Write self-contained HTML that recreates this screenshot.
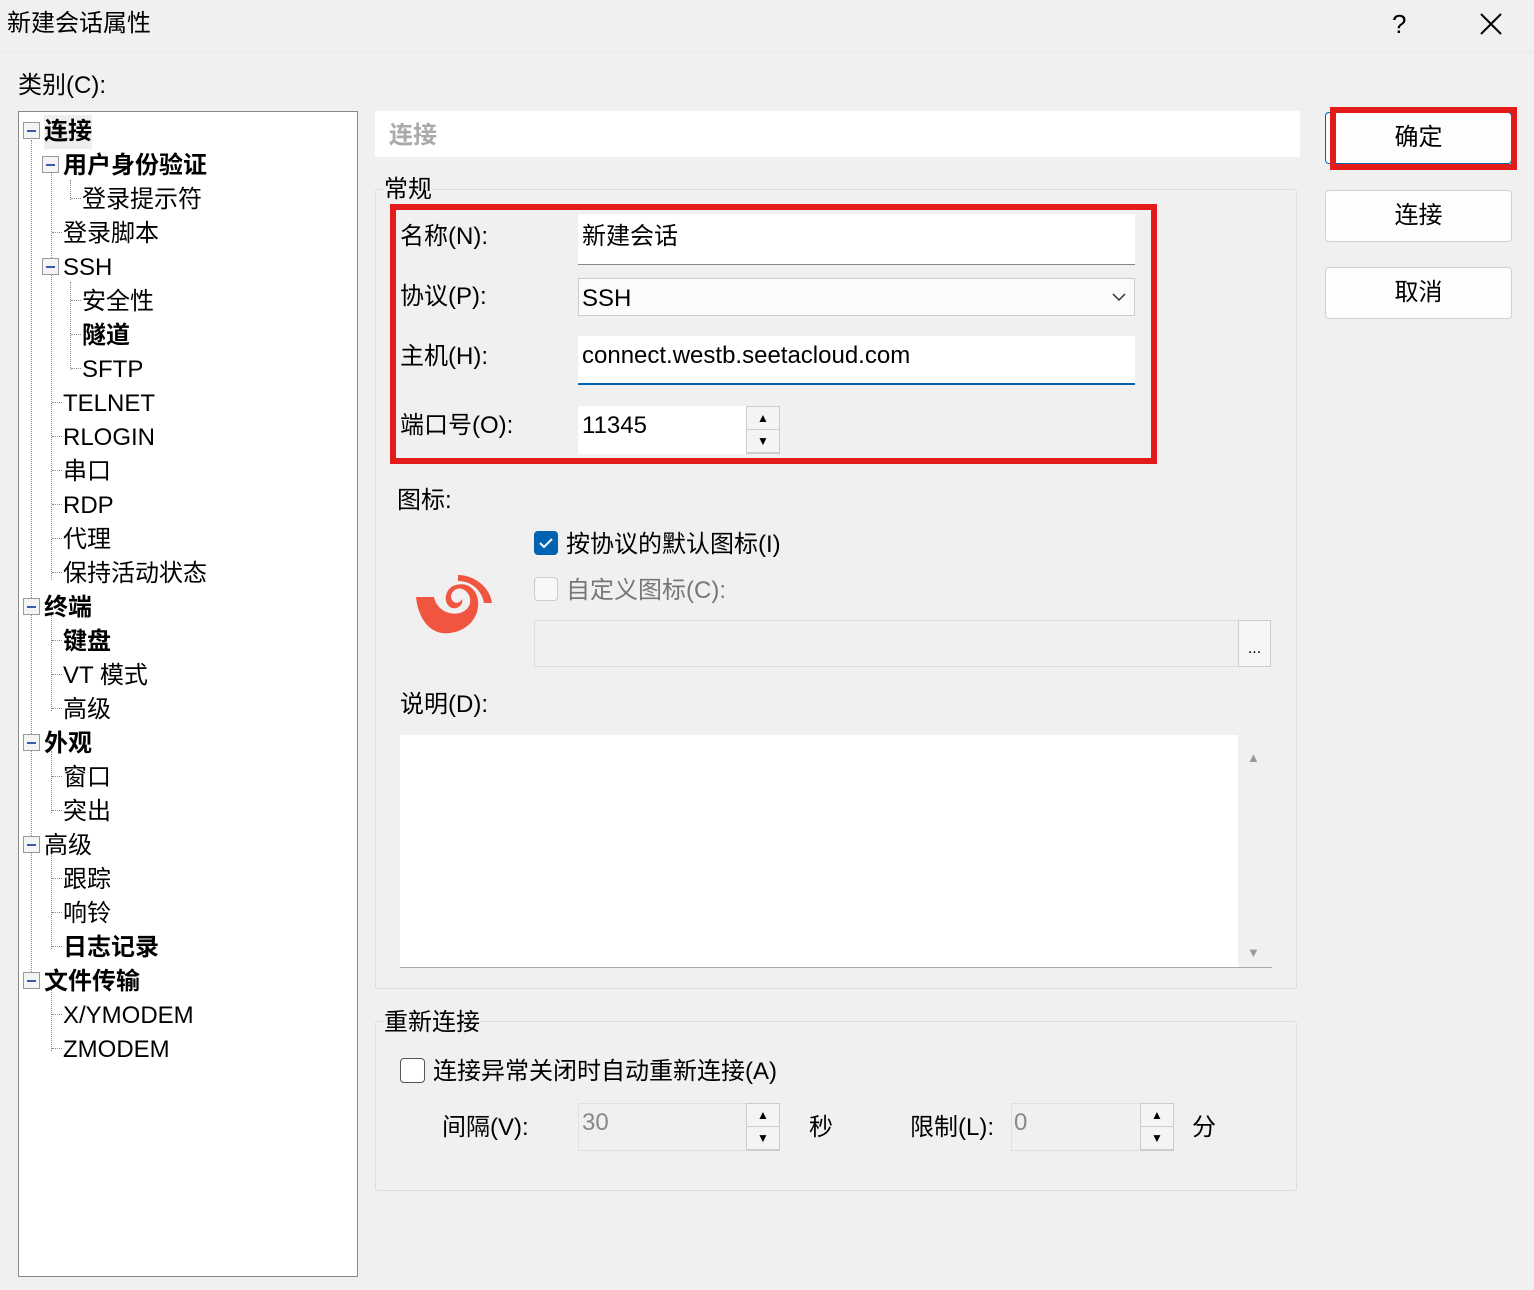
<!DOCTYPE html>
<html><head><meta charset="utf-8"><style>
*{margin:0;padding:0;box-sizing:border-box}
body{width:1534px;height:1290px;background:#f0f0f0;font-family:"Liberation Sans","Noto Sans CJK SC",sans-serif;font-size:24px;color:#000;position:relative;overflow:hidden}
.a{position:absolute;white-space:nowrap;line-height:26px}
.t{position:absolute;line-height:34px;height:34px;white-space:nowrap;margin-top:2px}
.b{font-weight:bold}
.box{position:absolute;width:17px;height:17px;border:1px solid #999;background:#f4f4f4}
.box:after{content:"";position:absolute;left:3px;top:7px;width:9px;height:2px;background:#3b5ea8}
.vl{position:absolute;border-left:1px dotted #888}
.hl{position:absolute;border-top:1px dotted #888;width:10px}
.btn{position:absolute;background:#fdfdfd;border:1px solid #d0d0d0;border-radius:4px;text-align:center;line-height:50px}
.red{position:absolute;border:6px solid #e31b1b}
.in{position:absolute;background:#fff}
.spin{position:absolute;width:34px;border:1px solid #ccc;background:#f0f0f0}
.spin div{height:50%;border-bottom:1px solid #ccc;background:#f4f4f4;display:flex;align-items:center;justify-content:center;font-size:12px}
.grp{position:absolute;border:1px solid #ddd;border-radius:3px}
</style></head><body>
<div class="a" style="left:7px;top:11px">新建会话属性</div>
<div class="a" style="left:1392px;top:11px;font-size:26px">?</div>
<svg class="a" style="left:1479px;top:12px" width="24" height="24"><path d="M2 2L22 22M22 2L2 22" stroke="#000" stroke-width="2"/></svg>
<div class="a" style="left:0;top:52px;width:1534px;height:1px;background:#e8e8e8"></div>
<div class="a" style="left:18px;top:73px">类别(C):</div>
<div class="a" style="left:18px;top:111px;width:340px;height:1166px;background:#fff;border:1px solid #888"></div>
<div class="vl" style="left:31px;top:140px;height:842px"></div>
<div class="vl" style="left:51px;top:172px;height:408px"></div>
<div class="vl" style="left:70px;top:180px;height:20px"></div>
<div class="vl" style="left:70px;top:282px;height:88px"></div>
<div class="vl" style="left:51px;top:615px;height:96px"></div>
<div class="vl" style="left:51px;top:751px;height:62px"></div>
<div class="vl" style="left:51px;top:853px;height:96px"></div>
<div class="vl" style="left:51px;top:989px;height:62px"></div>
<div class="box" style="left:23px;top:122px"></div>
<div class="t b" style="left:44px;top:113px;background:#eee">连接</div>
<div class="box" style="left:42px;top:156px"></div>
<div class="t b" style="left:63px;top:147px">用户身份验证</div>
<div class="hl" style="left:71px;top:198px"></div><div class="t" style="left:82px;top:181px">登录提示符</div>
<div class="hl" style="left:52px;top:232px"></div><div class="t" style="left:63px;top:215px">登录脚本</div>
<div class="box" style="left:42px;top:258px"></div><div class="t" style="left:63px;top:249px">SSH</div>
<div class="hl" style="left:71px;top:300px"></div><div class="t" style="left:82px;top:283px">安全性</div>
<div class="hl" style="left:71px;top:334px"></div><div class="t b" style="left:82px;top:317px">隧道</div>
<div class="hl" style="left:71px;top:368px"></div><div class="t" style="left:82px;top:351px">SFTP</div>
<div class="hl" style="left:52px;top:402px"></div><div class="t" style="left:63px;top:385px">TELNET</div>
<div class="hl" style="left:52px;top:436px"></div><div class="t" style="left:63px;top:419px">RLOGIN</div>
<div class="hl" style="left:52px;top:470px"></div><div class="t" style="left:63px;top:453px">串口</div>
<div class="hl" style="left:52px;top:504px"></div><div class="t" style="left:63px;top:487px">RDP</div>
<div class="hl" style="left:52px;top:538px"></div><div class="t" style="left:63px;top:521px">代理</div>
<div class="hl" style="left:52px;top:572px"></div><div class="t" style="left:63px;top:555px">保持活动状态</div>
<div class="box" style="left:23px;top:598px"></div><div class="t b" style="left:44px;top:589px">终端</div>
<div class="hl" style="left:52px;top:640px"></div><div class="t b" style="left:63px;top:623px">键盘</div>
<div class="hl" style="left:52px;top:674px"></div><div class="t" style="left:63px;top:657px">VT 模式</div>
<div class="hl" style="left:52px;top:708px"></div><div class="t" style="left:63px;top:691px">高级</div>
<div class="box" style="left:23px;top:734px"></div><div class="t b" style="left:44px;top:725px">外观</div>
<div class="hl" style="left:52px;top:776px"></div><div class="t" style="left:63px;top:759px">窗口</div>
<div class="hl" style="left:52px;top:810px"></div><div class="t" style="left:63px;top:793px">突出</div>
<div class="box" style="left:23px;top:836px"></div><div class="t" style="left:44px;top:827px">高级</div>
<div class="hl" style="left:52px;top:878px"></div><div class="t" style="left:63px;top:861px">跟踪</div>
<div class="hl" style="left:52px;top:912px"></div><div class="t" style="left:63px;top:895px">响铃</div>
<div class="hl" style="left:52px;top:946px"></div><div class="t b" style="left:63px;top:929px">日志记录</div>
<div class="box" style="left:23px;top:972px"></div><div class="t b" style="left:44px;top:963px">文件传输</div>
<div class="hl" style="left:52px;top:1014px"></div><div class="t" style="left:63px;top:997px">X/YMODEM</div>
<div class="hl" style="left:52px;top:1048px"></div><div class="t" style="left:63px;top:1031px">ZMODEM</div>

<div class="a" style="left:375px;top:111px;width:925px;height:46px;background:#fff"></div>
<div class="a b" style="left:389px;top:123px;color:#aaa">连接</div>
<div class="grp" style="left:375px;top:189px;width:922px;height:800px"></div>
<div class="a" style="left:384px;top:177px;background:#f0f0f0">常规</div>
<div class="a" style="left:400px;top:224px">名称(N):</div>
<div class="in" style="left:578px;top:214px;width:557px;height:51px;border-bottom:1px solid #888"></div>
<div class="a" style="left:582px;top:224px">新建会话</div>
<div class="a" style="left:400px;top:284px">协议(P):</div>
<div class="in" style="left:578px;top:278px;width:557px;height:38px;background:#fbfbfb;border:1px solid #ccc"></div>
<div class="a" style="left:582px;top:286px">SSH</div>
<svg class="a" style="left:1112px;top:292px" width="14" height="10"><path d="M1 2L7 8L13 2" stroke="#333" fill="none" stroke-width="1.5"/></svg>
<div class="a" style="left:400px;top:344px">主机(H):</div>
<div class="in" style="left:578px;top:336px;width:557px;height:49px;border-bottom:2px solid #0063b1"></div>
<div class="a" style="left:582px;top:343px">connect.westb.seetacloud.com</div>
<div class="a" style="left:400px;top:413px">端口号(O):</div>
<div class="in" style="left:578px;top:406px;width:170px;height:48px"></div>
<div class="a" style="left:582px;top:413px">11345</div>
<div class="spin" style="left:746px;top:406px;height:48px"><div>▲</div><div>▼</div></div>
<div class="red" style="left:390px;top:204px;width:767px;height:260px"></div>
<div class="btn" style="left:1325px;top:112px;width:187px;height:52px;border-color:#0063b1">确定</div>
<div class="red" style="left:1330px;top:107px;width:187px;height:63px"></div>
<div class="btn" style="left:1325px;top:190px;width:187px;height:52px">连接</div>
<div class="btn" style="left:1325px;top:267px;width:187px;height:52px">取消</div>

<div class="a" style="left:397px;top:488px">图标:</div>
<svg class="a" style="left:414px;top:573px" width="80" height="64" viewBox="0 0 80 64"><path d="M2 24 L20 24 C24 44 52 46 56 30 C58 18 44 10 38 20 C34 28 44 34 48 26 C50 32 42 38 36 34 C28 28 32 14 42 12 C56 8 66 20 64 34 C62 52 44 62 28 60 C14 58 4 44 2 24Z" fill="#f05540"/><path d="M44 2 C60 2 76 14 78 30 L70 30 C68 18 58 8 44 8Z" fill="#f05540"/></svg>
<div class="a" style="left:534px;top:531px;width:24px;height:24px;background:#0063b1;border-radius:4px"></div>
<svg class="a" style="left:538px;top:535px" width="16" height="16"><path d="M2 8L6 12L14 4" stroke="#fff" stroke-width="2" fill="none"/></svg>
<div class="a" style="left:566px;top:532px">按协议的默认图标(I)</div>
<div class="a" style="left:534px;top:577px;width:24px;height:24px;background:#f8f8f8;border:1px solid #ccc;border-radius:4px"></div>
<div class="a" style="left:566px;top:578px;color:#777">自定义图标(C):</div>
<div class="a" style="left:534px;top:620px;width:737px;height:47px;border:1px solid #ddd"></div>
<div class="a" style="left:1238px;top:620px;width:33px;height:47px;border:1px solid #ccc;background:#f6f6f6;text-align:center;font-size:16px;line-height:56px">...</div>
<div class="a" style="left:400px;top:692px">说明(D):</div>
<div class="a" style="left:400px;top:735px;width:872px;height:233px;background:#fff;border-bottom:1px solid #aaa"></div>
<div class="a" style="left:1238px;top:735px;width:34px;height:232px;background:#f0f0f0"></div>
<div class="a" style="left:1247px;top:745px;font-size:13px;color:#999">▲</div>
<div class="a" style="left:1247px;top:940px;font-size:13px;color:#999">▼</div>

<div class="grp" style="left:375px;top:1021px;width:922px;height:170px"></div>
<div class="a" style="left:384px;top:1010px;background:#f0f0f0">重新连接</div>
<div class="a" style="left:400px;top:1058px;width:25px;height:25px;background:#fff;border:1px solid #555;border-radius:4px"></div>
<div class="a" style="left:433px;top:1059px">连接异常关闭时自动重新连接(A)</div>
<div class="a" style="left:442px;top:1115px">间隔(V):</div>
<div class="a" style="left:578px;top:1103px;width:170px;height:48px;border:1px solid #e0e0e0"></div>
<div class="a" style="left:582px;top:1110px;color:#888">30</div>
<div class="spin" style="left:746px;top:1103px;height:48px"><div>▲</div><div>▼</div></div>
<div class="a" style="left:809px;top:1115px">秒</div>
<div class="a" style="left:910px;top:1115px">限制(L):</div>
<div class="a" style="left:1011px;top:1103px;width:130px;height:48px;border:1px solid #e0e0e0"></div>
<div class="a" style="left:1014px;top:1110px;color:#888">0</div>
<div class="spin" style="left:1140px;top:1103px;height:48px"><div>▲</div><div>▼</div></div>
<div class="a" style="left:1192px;top:1115px">分</div>
</body></html>
